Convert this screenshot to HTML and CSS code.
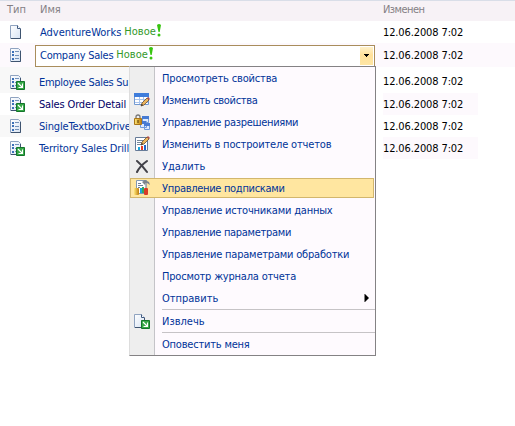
FILE: index.html
```html
<!DOCTYPE html>
<html lang="ru">
<head>
<meta charset="utf-8">
<title>Отчеты</title>
<link rel="stylesheet" href="styles.css">
</head>
<body>
<svg class="defs" aria-hidden="true">
  <defs>
    <linearGradient id="paper" x2="1" y2="1"><stop stop-color="#fff"/><stop offset="1" stop-color="#d7e3f3"/></linearGradient>
    <linearGradient id="gold" x2="1"><stop stop-color="#ffe87b"/><stop offset="1" stop-color="#bd7b09"/></linearGradient>
    <symbol id="page" viewBox="0 0 16 16"><path d="M2.5 1.5h7l3 3v10h-10z" fill="url(#paper)" stroke="#8fa3c0"/><path d="M9.5 1.5v3h3" fill="#fff" stroke="#415b80"/><path d="M3 14.5h9.5V5" fill="none" stroke="#3e536f"/></symbol>
    <symbol id="report" viewBox="0 0 16 16"><path d="M2.5 1.5h8l2 2v11h-10z" fill="url(#paper)" stroke="#8fa3c0"/><path d="M3 14.5h9.5V4" fill="none" stroke="#3e536f"/><path d="M4 4h2v2H4zM4 7h2v2H4zM4 11h2v2H4z" fill="#3b70b8"/><path d="M7 4.5h4M7 8.5h4M7 11.5h4" stroke="#7392ba"/></symbol>
    <symbol id="out" viewBox="0 0 9 9"><path d="M.5.5h8v8h-8z" fill="#36a847" stroke="#13752a"/><path d="M2 2l4 4M6.5 2.5v4h-4" fill="none" stroke="#fff" stroke-width="1.1"/></symbol>
    <symbol id="pencil" viewBox="0 0 10 10"><path d="M1 9l1-3 5-5 2 2-5 5z" fill="#edb65d" stroke="#684d32" stroke-width=".8"/><path d="M7 1l1-1 2 2-1 1z" fill="#b84c48"/><path d="M1 9l1-2 1 1z" fill="#222"/></symbol>
  </defs>
</svg>
<main class="list">
  <div class="row head"><span class="type">Тип</span><span class="name">Имя</span><span class="date">Изменен</span></div>
  <div class="row first"><span class="type"><svg class="icon"><use href="#page"/></svg></span><span class="name"><span>AdventureWorks</span><span class="new">Новое</span><svg class="bang" viewBox="0 0 6 13"><path d="M1 1q2-2 4 0L3.7 8H2.5z" fill="#39c510"/><circle cx="3" cy="11" r="1.5" fill="#39c510"/></svg></span><span class="date">12.06.2008 7:02</span></div>
  <div class="row second"><span class="type"><svg class="icon"><use href="#report"/></svg></span><span class="name"><span class="field"><span class="company">Company Sales</span><span class="new">Новое</span><svg class="bang" viewBox="0 0 6 13"><path d="M1 1q2-2 4 0L3.7 8H2.5z" fill="#39c510"/><circle cx="3" cy="11" r="1.5" fill="#39c510"/></svg><span class="drop"><svg viewBox="0 0 5 3"><path d="M0 0h5v1H4v1H3v1H2V2H1V1H0z"/></svg></span></span></span><span class="date">12.06.2008 7:02</span></div>
  <div class="row third"><span class="type"><svg class="icon wide" viewBox="0 0 17 16"><use href="#report" width="16" height="16"/><use href="#out" x="8" y="7" width="9" height="9"/></svg></span><span class="name tight">Employee Sales Su</span><span class="date">12.06.2008 7:02</span></div>
  <div class="row fourth"><span class="type"><svg class="icon wide" viewBox="0 0 17 16"><use href="#report" width="16" height="16"/><use href="#out" x="8" y="7" width="9" height="9"/></svg></span><span class="name snug">Sales Order Detail</span><span class="date tint">12.06.2008 7:02</span></div>
  <div class="row fifth"><span class="type"><svg class="icon"><use href="#report"/></svg></span><span class="name snug">SingleTextboxDrive</span><span class="date">12.06.2008 7:02</span></div>
  <div class="row sixth"><span class="type"><svg class="icon wide" viewBox="0 0 17 16"><use href="#report" width="16" height="16"/><use href="#out" x="8" y="7" width="9" height="9"/></svg></span><span class="name snug">Territory Sales Drill</span><span class="date tint">12.06.2008 7:02</span></div>
</main>
<nav class="menu">
  <div class="item"><i></i><span class="snug">Просмотреть свойства</span></div>
  <div class="item"><i><svg class="icon" viewBox="0 0 16 16"><path d="M.5 1.5h14v11H.5z" fill="#fff" stroke="#7299d1"/><path d="M0 1h15v4H0z" fill="#3f7ddb"/><path d="M1 7.5h13M1 10.5h13M5.5 5v7M9.5 5v7" stroke="#a9c4ed"/><use href="#pencil" x="6" y="5" width="10" height="10"/></svg></i><span class="tight">Изменить свойства</span></div>
  <div class="item"><i><svg class="icon" viewBox="0 0 16 16"><path d="M8.5 2.5h6v6h-6zM6.5 7.5h6v6h-6zM10.5 9.5h5v6h-5z" fill="#dceaff" stroke="#6f9bdb"/><path d="M8 2h7v3H8zM6 7h6v3H6zM10 9h6v3h-6z" fill="#467bd3"/><path d="M2 5V3q0-2 2-2t2 2v2" fill="none" stroke="#777" stroke-width="1.3"/><path d="M.5 4.5h7v6h-7z" fill="url(#gold)" stroke="#a97618"/><path d="M4 6v3" stroke="#543900"/></svg></i><span class="tight">Управление разрешениями</span></div>
  <div class="item"><i><svg class="icon" viewBox="0 0 16 16"><path d="M1.5 1.5h12v13h-12z" fill="#fff" stroke="#667b98"/><path d="M3 4.5h6M3 6.5h6M3 8.5h4" stroke="#789"/><path d="M4 11h2v3H4z" fill="#19a8dc"/><path d="M7 10h2v4H7z" fill="#e73b26"/><path d="M10 9h2v5h-2z" fill="#2166cb"/><use href="#pencil" x="6" y="0" width="10" height="10"/></svg></i><span class="snug">Изменить в построителе отчетов</span></div>
  <div class="item"><i><svg class="icon" viewBox="0 0 16 16"><path d="M3 3q5 4 10 11M13 3Q6 8 3 14" fill="none" stroke="#424249" stroke-width="2.1" stroke-linecap="round"/></svg></i><span>Удалить</span></div>
  <div class="item selected"><i><svg class="icon" viewBox="0 0 16 16"><path d="M2.5.5h10v13h-10z" fill="#fff" stroke="#8298b3"/><path d="M4 3.5h3M4 5.5h5M4 7.5h2" stroke="#718095"/><path d="M6 8h2v5H6z" fill="#1aa6dc"/><path d="M8 7h2v6H8z" fill="#37a85a"/><path d="M8 2l3-2 4 2 1 3-3-2-2 2z" fill="#7d848b"/><path d="M12 3v5" stroke="#a9adb2" stroke-width="1.7"/><rect x="10" y="8" width="4" height="7" rx="1" fill="#d83c28"/><rect y="8" width="5" height="7" rx="1" fill="url(#gold)"/></svg></i><span class="tight">Управление подписками</span></div>
  <div class="item"><i></i><span class="medium">Управление источниками данных</span></div>
  <div class="item"><i></i><span class="tight">Управление параметрами</span></div>
  <div class="item"><i></i><span class="medium">Управление параметрами обработки</span></div>
  <div class="item"><i></i><span class="medium">Просмотр журнала отчета</span></div>
  <div class="item"><i></i><span>Отправить</span><svg class="more" viewBox="0 0 4 8"><path d="M0 0h1v1h1v1h1v1h1v2H3v1H2v1H1v1H0z"/></svg></div>
  <div class="rule"></div>
  <div class="item"><i><svg class="icon" viewBox="0 0 16 16"><use href="#page" x="-2" width="16" height="16"/><use href="#out" x="7" y="7" width="9" height="9"/></svg></i><span>Извлечь</span></div>
  <div class="rule"></div>
  <div class="item"><i></i><span class="medium">Оповестить меня</span></div>
</nav>
</body>
</html>
```
FILE: styles.css
```css
* { box-sizing: border-box; }
body { margin: 0; width: 515px; height: 426px; overflow: hidden; background: #fff; color: #000; font: 11px/14px "DejaVu Sans Condensed", "DejaVu Sans", sans-serif; font-stretch: condensed; }
.defs { position: absolute; width: 0; height: 0; }
.icon { display: block; width: 16px; height: 16px; }
.wide { width: 17px; }
.snug { letter-spacing: -.16px; }
.medium { letter-spacing: -.2px; }
.tight { letter-spacing: -.3px; }
.row { display: grid; grid-template-columns: 35px 348px 132px; height: 22px; color: #003399; white-space: nowrap; }
.row > span { display: flex; align-items: center; }
.row .type { padding-left: 8px; }
.row .name { padding-top: 1px; padding-left: 4px; }
.row .date { padding-top: 1px; color: #000; letter-spacing: -.12px; }
.head { height: 21px; padding-bottom: 3px; border-top: 1px solid #d9dee8; background: #f7f2f6; }
.row.head span { padding-top: 0; color: #848084; }
.row.head .type { padding-left: 7px; }
.row.head .name { padding-left: 5px; }
.row.head .date { letter-spacing: -.55px; }
.row.first .name { padding-left: 5px; }
.second { height: 24px; background: #fdf9fd; }
.row.second .name { padding: 1px 8px 0 0; }
.field { display: flex; align-items: center; width: 340px; height: 22px; padding-left: 4px; border: 1px solid #a98d5c; background: #fff; }
.company { letter-spacing: -.25px; }
.new { margin: -2px 0 0 3px; color: #33992b; }
.bang { width: 6px; height: 13px; margin: -4px 0 0 0; }
.drop { display: flex; align-items: center; justify-content: center; width: 13px; height: 18px; margin: 0 1px 0 auto; background: linear-gradient(#fff1ca, #ffe09a 45%, #ffe6a4); }
.drop svg { width: 5px; height: 3px; }
.third { height: 26px; padding-top: 4px; background: linear-gradient(90deg, #f8f8f8 130px, #fff 130px); }
.third .date { margin-top: -1px; }
.fifth { background: linear-gradient(90deg, #f8f8f8 130px, #fff 130px); }
.fourth .name { color: #000066; }
.row .tint { width: 95px; background: #fdf9fd; }
.menu { position: absolute; left: 129px; top: 66px; width: 247px; height: 290px; border: 1px solid #848284; border-left-color: #ddd; background: linear-gradient(90deg, #eee 24px, #c4c4c8 24px 25px, #fefafe 25px); color: #003399; }
.item { display: flex; align-items: center; height: 22px; white-space: nowrap; }
.item > span { padding-top: 1px; }
.item i { flex: none; width: 32px; padding-left: 4px; }
.selected { height: 20px; margin: 1px 1px 1px 0; border: 1px solid #d2b66d; background: #ffe6a0; }
.selected i { width: 31px; padding-left: 3px; }
.rule { height: 1px; margin-left: 32px; background: #c6c3c6; }
.more { width: 5px; height: 8px; margin: 0 6px 0 auto; }
```
